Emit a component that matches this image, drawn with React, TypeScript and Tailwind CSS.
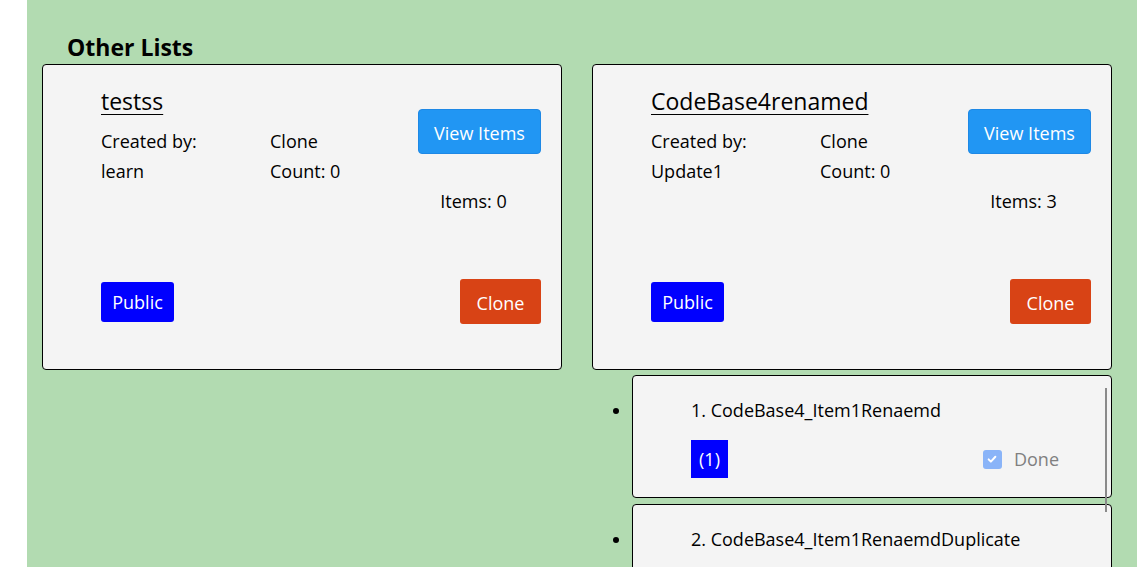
const font = { fontFamily: '"Open Sans", "Noto Sans", sans-serif' };

type ListCard = { name: string; owner: string; count: number; items: number };

const lists: ListCard[] = [
  { name: 'testss', owner: 'learn', count: 0, items: 0 },
  { name: 'CodeBase4renamed', owner: 'Update1', count: 0, items: 3 },
];

const items = [
  { n: 1, title: 'CodeBase4_Item1Renaemd', badge: '(1)', done: true },
  { n: 2, title: 'CodeBase4_Item1RenaemdDuplicate', badge: '(1)', done: true },
];

function Card({ list }: { list: ListCard }) {
  return (
    <div className="flex h-[306px] flex-col justify-between rounded-[4px] border border-black bg-[#f4f4f4] pl-[58px] pr-[20px] pt-[20px] pb-[45px]">
      <div className="flex justify-between">
        <div>
          <div className="text-[23px] leading-[32px] underline underline-offset-[4px] decoration-1">{list.name}</div>
          <div className="mt-[9px] grid grid-cols-[169px_auto] text-[18px] leading-[30px]">
            <span>Created by:</span>
            <span>Clone</span>
            <span>{list.owner}</span>
            <span>Count: {list.count}</span>
          </div>
        </div>
        <div className="flex flex-col items-center pt-[24px]">
          <button className="h-[45px] w-[123px] rounded-[4px] border border-[#1e88e5] bg-[#2196f3] pt-[3px] text-[18px] text-white">
            View Items
          </button>
          <div className="mt-[32px] pr-[12px] text-[18px] leading-[30px]">Items: {list.items}</div>
        </div>
      </div>
      <div className="flex items-center justify-between">
        <button className="h-[40px] w-[73px] rounded-[3px] bg-[#0000ff] pt-[2px] text-[18px] text-white">Public</button>
        <button className="h-[45px] w-[81px] rounded-[3px] bg-[#d84315] pt-[3px] text-[18px] text-white">Clone</button>
      </div>
    </div>
  );
}

function Check() {
  return (
    <span className="flex h-[19px] w-[19px] items-center justify-center rounded-[3px] bg-[#8ab4f8]">
      <svg viewBox="0 0 16 16" className="h-[12px] w-[12px]" fill="none" stroke="white" strokeWidth="2.6" strokeLinecap="round" strokeLinejoin="round">
        <path d="M3.5 8.5l3 3 6-6.5" />
      </svg>
    </span>
  );
}

export default function App() {
  return (
    <div className="h-[567px] overflow-hidden bg-white text-black" style={font}>
      <div className="ml-[27px] h-[567px] overflow-hidden bg-[#b2dbb1] pl-[15px] pt-[30px]">
        <h2 className="pl-[25px] text-[23px] font-bold leading-[34px]">Other Lists</h2>
        <div className="grid grid-cols-[520px_520px] gap-x-[30px]">
          <Card list={lists[0]} />
          <div>
            <Card list={lists[1]} />
            <div className="relative">
              <ul className="mt-[5px] flex list-disc flex-col gap-[6px] pl-[40px]">
                {items.map((it) => (
                  <li key={it.n} className="marker:text-[18px]">
                    <div className="h-[123px] rounded-[4px] border border-black bg-[#f4f4f4] pl-[58px] pr-[50px] pt-[20px] text-[18px]">
                      <div className="leading-[28px]">{it.n}. {it.title}</div>
                      <div className="mt-[16px] flex items-center justify-between">
                        <span className="flex h-[38px] w-[37px] items-center justify-center bg-[#0000ff] text-white">{it.badge}</span>
                        <span className="flex items-center gap-[12px] pr-[2px] text-[#808080]">
                          <Check />
                          Done
                        </span>
                      </div>
                    </div>
                  </li>
                ))}
              </ul>
              <div className="absolute right-[5px] top-[13px] h-[124px] w-[2px] bg-[#8a8a8a]" />
            </div>
          </div>
        </div>
      </div>
    </div>
  );
}
